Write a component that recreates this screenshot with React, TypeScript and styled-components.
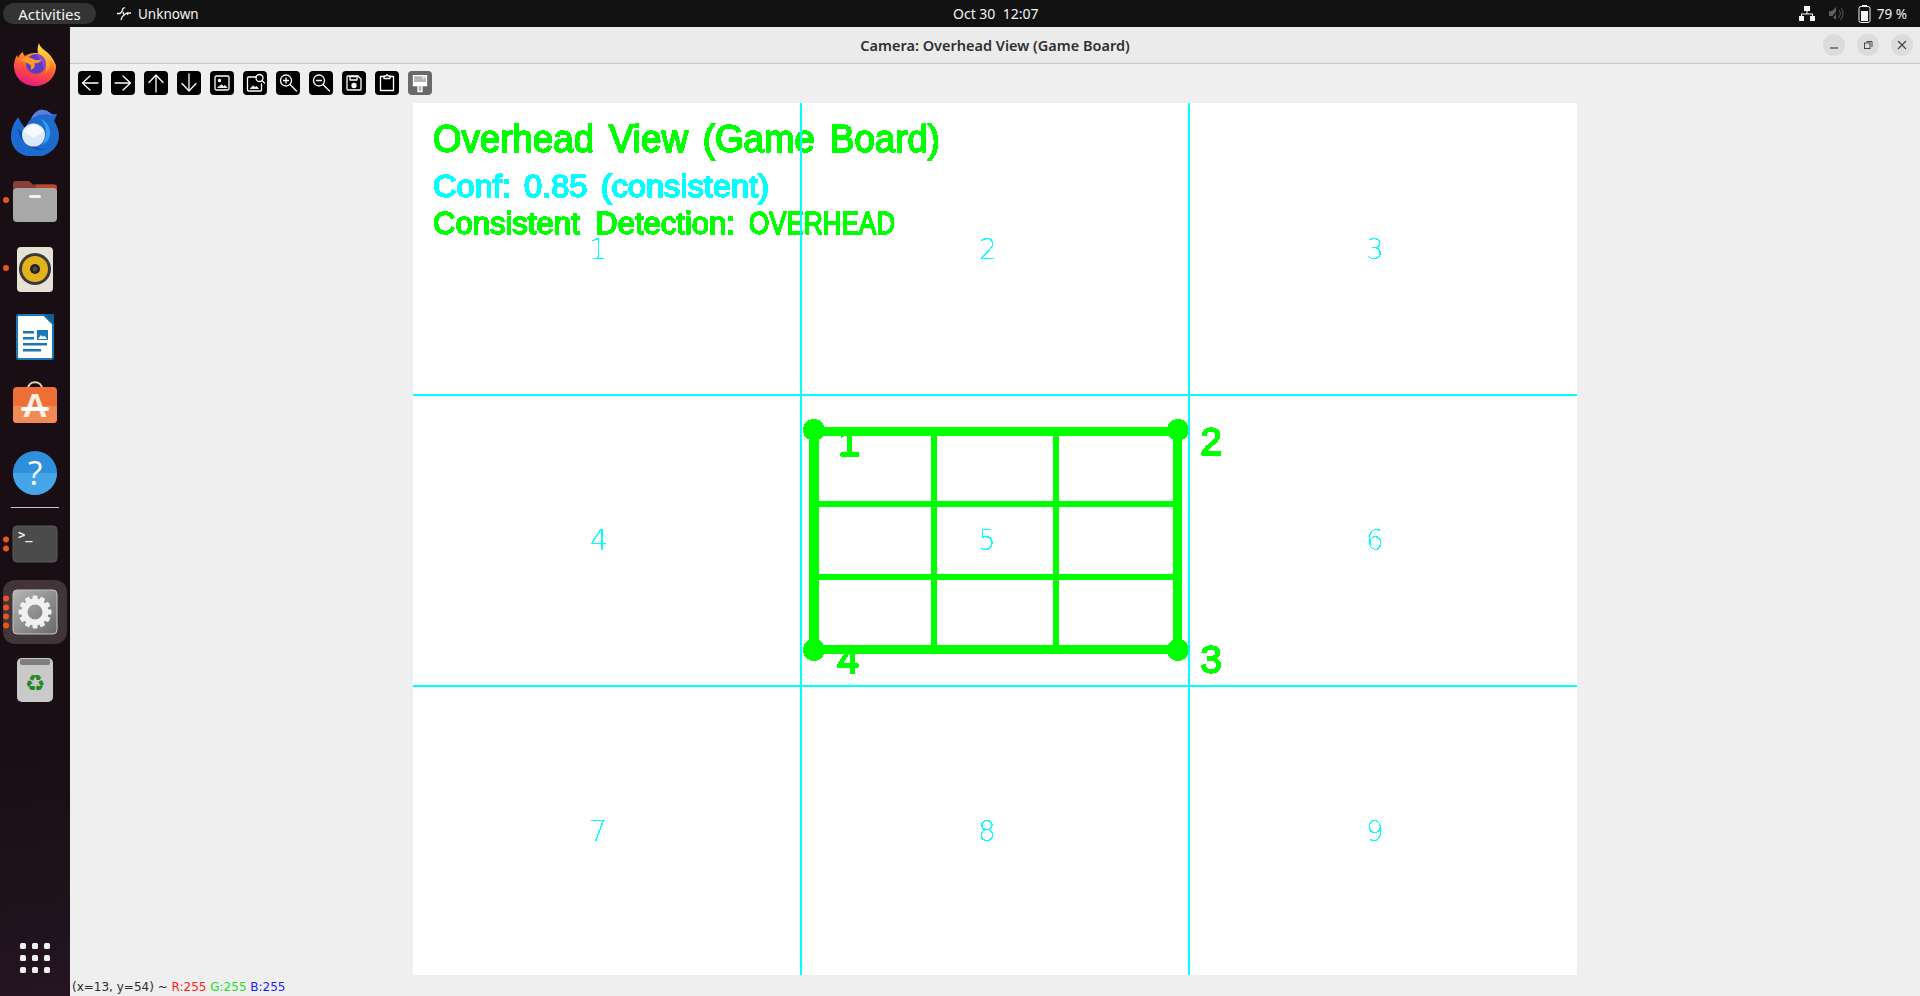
import React from 'react';
import styled, { createGlobalStyle } from 'styled-components';

const GlobalStyle = createGlobalStyle`
    html, body {
        margin: 0;
        padding: 0;
        height: 100%;
        overflow: hidden;
        background: #efefef;
    }
    #root {
        height: 100%;
    }
`;

const Page = styled.div`
    display: flex;
    flex-direction: column;
    width: 1920px;
    height: 996px;
    font-family: "Noto Sans", "Open Sans", sans-serif;
`;

const TopBar = styled.div`
    display: flex;
    align-items: center;
    height: 27px;
    flex: none;
    background: #121212;
    color: #f2f2f2;
    font-size: 13.500px;
`;

const TopLeft = styled.div`
    display: flex;
    align-items: center;
    width: 953px;
    padding-left: 3px;
    box-sizing: border-box;
`;

const Activities = styled.div`
    display: flex;
    align-items: center;
    justify-content: center;
    width: 93px;
    height: 21px;
    border-radius: 11px;
    background: #343434;
    font-size: 15px;
`;

const AppMenu = styled.div`
    display: flex;
    align-items: center;
    gap: 6px;
    margin-left: 20px;
`;

const Clock = styled.div`
    width: 85px;
    text-align: center;
    font-size: 14px;
    white-space: pre;
`;

const Tray = styled.div`
    display: flex;
    align-items: center;
    margin-left: auto;
    padding-right: 13px;
    gap: 14px;
`;

const Battery = styled.span`
    margin-left: -8px;
`;

const Body = styled.div`
    display: flex;
    flex: 1;
    min-height: 0;
`;

const Dock = styled.div`
    display: flex;
    flex-direction: column;
    align-items: center;
    width: 70px;
    flex: none;
    box-sizing: border-box;
    padding: 3px 0 23px;
    background: linear-gradient(170deg, #1a0e15 0%, #1a0e15 75%, #241520 100%);
`;

const DockItem = styled.div<{ $active?: boolean }>`
    position: relative;
    display: flex;
    align-items: center;
    justify-content: center;
    width: 64px;
    height: ${({ $active }) => ($active ? '64px' : '68px')};
    margin: ${({ $active }) => ($active ? '2px 0' : '0')};
    border-radius: 12px;
    background: ${({ $active }) => ($active ? '#413539' : 'transparent')};
`;

const RunDots = styled.div`
    position: absolute;
    left: 0;
    top: 50%;
    transform: translateY(-50%);
    display: flex;
    flex-direction: column;
    gap: 3px;
`;

const RunDot = styled.span`
    display: block;
    width: 6px;
    height: 6px;
    border-radius: 50%;
    background: #e95420;
`;

const DockRule = styled.div`
    width: 48px;
    height: 1px;
    margin: 1px 0 2px;
    background: #c9c5c8;
`;

const AppGrid = styled.div`
    display: grid;
    grid-template-columns: repeat(3, 6px);
    grid-auto-rows: 6px;
    gap: 6px;
    margin-top: auto;
`;

const AppDot = styled.span`
    border-radius: 1.5px;
    background: #f2f0f0;
`;

const Window = styled.div`
    display: flex;
    flex-direction: column;
    flex: 1;
    min-width: 0;
    background: #efefef;
`;

const TitleBar = styled.div`
    display: grid;
    grid-template-columns: 1fr auto 1fr;
    align-items: center;
    height: 36px;
    flex: none;
    background: #ebebeb;
    border-bottom: 1px solid #c6c6c6;
`;

const Title = styled.div`
    grid-column: 2;
    font-size: 14.500px;
    font-weight: 600;
    color: #303030;
`;

const WindowButtons = styled.div`
    display: flex;
    justify-content: flex-end;
    gap: 12px;
    padding-right: 7px;
`;

const WindowButton = styled.div`
    display: flex;
    align-items: center;
    justify-content: center;
    width: 22px;
    height: 22px;
    border-radius: 50%;
    background: #dcdcdc;
`;

const Toolbar = styled.div`
    display: flex;
    align-items: flex-start;
    gap: 9px;
    height: 39px;
    flex: none;
    box-sizing: border-box;
    padding: 7px 0 0 8px;
`;

const ToolButton = styled.div<{ $muted?: boolean }>`
    display: flex;
    width: 24px;
    height: 24px;
    border-radius: 4px;
    background: ${({ $muted }) => ($muted ? '#696969' : '#000')};
`;

const CanvasArea = styled.div`
    display: flex;
    justify-content: center;
    height: 872px;
    flex: none;
`;

const Canvas = styled.svg`
    display: block;
    width: 1164px;
    height: 872px;
    background: #fff;
`;

const StatusBar = styled.div`
    display: flex;
    align-items: center;
    flex: 1;
    padding: 2px 0 0 2px;
    font-family: "DejaVu Sans", sans-serif;
    font-size: 12px;
    color: #2c2c2c;
    white-space: pre;
`;

const Readout = styled.span<{ $color: string }>`
    color: ${({ $color }) => $color};
`;

const GREEN = '#00ff00';
const CYAN = '#00ffff';

const ToolIcon = ({ children }: { children: React.ReactNode }) => (
    <svg width="24" height="24" viewBox="0 0 24 24" fill="none" stroke="#fff" strokeWidth="1.300" strokeLinecap="round" strokeLinejoin="round">
        {children}
    </svg>
);

const tools: React.ReactNode[] = [
    <><path d="M20 12H5" /><path d="M12 5l-7.500 7 7.500 7" /></>,
    <><path d="M4 12h15" /><path d="M12 5l7.500 7-7.500 7" /></>,
    <><path d="M12 21V5" /><path d="M5 11.500L12 4l7 7.500" /></>,
    <><path d="M12 3v16" /><path d="M5 12.500l7 7.500 7-7.500" /></>,
    <><rect x="5" y="5" width="14" height="14" rx="1.500" /><circle cx="9.500" cy="9.500" r="1" fill="#fff" /><path d="M8 16.500h9l-2-2-1.500 1-1.500-1.500z" fill="#fff" strokeWidth="0.800" /></>,
    <><path d="M13 6H5.500a1 1 0 0 0-1 1v12a1 1 0 0 0 1 1h12a1 1 0 0 0 1-1v-6" /><circle cx="16.500" cy="7" r="3.500" /><path d="M19 9.500l2.500 2.500" /><path d="M7.500 17.500h8l-2-2-1.500 1-1.500-1.500z" fill="#fff" strokeWidth="0.800" /></>,
    <><circle cx="10" cy="9.500" r="5.500" /><path d="M14 13.500l6.500 6.500" /><path d="M7.500 9.500h5M10 7v5" /></>,
    <><circle cx="10" cy="9.500" r="5.500" /><path d="M14 13.500l6.500 6.500" /><path d="M7.500 9.500h5" /></>,
    <><path d="M5 6a1 1 0 0 1 1-1h10l3 3v10a1 1 0 0 1-1 1H6a1 1 0 0 1-1-1z" /><path d="M8 5.500h7v3.500H8z" /><circle cx="12" cy="14.500" r="2" fill="#fff" /></>,
    <><path d="M9 5.500H5.500v14h13v-14H15" /><path d="M9 7.500V5h2l1-1.500L13 5h2v2.500z" /></>,
    <><path d="M5.500 4.700h13v10h-4.500v5.800h-4v-5.800H5.500z" fill="#b5b5b5" strokeLinejoin="miter" /><path d="M5 11h14v4H5z" fill="#fff" stroke="none" /><path d="M15 5v3M17 5v2" stroke="#fff" strokeWidth="1" /></>,
];

const Firefox = () => (
    <svg width="48" height="48" viewBox="0 0 48 48">
        <defs>
            <linearGradient id="ffBase" x1="0.3" y1="1" x2="0.7" y2="0">
                <stop offset="0" stopColor="#e3158b" />
                <stop offset="0.45" stopColor="#ff4f3b" />
                <stop offset="1" stopColor="#ffb020" />
            </linearGradient>
            <linearGradient id="ffTop" x1="0.5" y1="0" x2="0.5" y2="1">
                <stop offset="0" stopColor="#ffe14a" />
                <stop offset="1" stopColor="#ff8a1f" />
            </linearGradient>
        </defs>
        <path d="M24 46C12 46 3 37 3 26c0-4 1-8 3-11l1 3c1-3 3-5 5-6 0 2 1 3 2 4 3-2 6-3 10-3 12 0 21 9 21 13 0 11-9 20-21 20z" fill="url(#ffBase)" />
        <path d="M28 3c1 5 6 7 10 11 5 5 7 11 7 15-1-4-3-7-6-9 1 5-1 11-5 14 3-6 1-14-5-18-3-3-3-8-1-13z" fill="url(#ffTop)" />
        <circle cx="25" cy="24" r="10" fill="#5c3ec6" />
        <path d="M25 14c6 0 10 5 10 10 0 2-1 5-2 6 0-6-4-11-8-16z" fill="#8a4bd0" />
        <path d="M9 20c4-4 10-3 13-1 4 2 7 1 9 0-1 3-5 5-8 4 2 3 0 6-4 7 2-2 1-5-1-6-3-2-6-2-9-4z" fill="#ff9a28" />
    </svg>
);

const Thunderbird = () => (
    <svg width="48" height="48" viewBox="0 3 48 48">
        <path d="M7.300 12.300C2 18 0 25 0 32c0 12 10 20 23 20 14 0 25-9 25-21 0-5-2-11-5-15l3-7h-6c-4-4-8-5-11-4-4 1-7 5-9 9-3 3-5 6-5.500 10C12 20 9 17 7.300 12.300z" fill="#1c6bcf" />
        <path d="M20 14c2-5 7-10 12-9 4 0 8 3 10 6-6-2-13-2-18 1z" fill="#5f7ddb" />
        <path d="M7 24c1 12 14 24 30 20-10 1-19-4-23-14z" fill="#0f4ea6" />
        <path d="M30 14c6 3 10 9 9 16-1 5-4 8-8 10 3-4 4-8 4-12 0-6-2-10-5-14z" fill="#3a9bf0" />
        <circle cx="22.500" cy="30" r="11.500" fill="#dbe8f7" />
        <path d="M12 26c3-2 7-6 10.500-7 3 0 8 4 11 7l-11 7z" fill="#f6f9fd" />
    </svg>
);

const Files = () => (
    <svg width="48" height="48" viewBox="0 0 48 48">
        <path d="M2 8a3 3 0 0 1 3-3h13l4 3.500h21a3 3 0 0 1 3 3V21H2z" fill="#8a3f3a" />
        <path d="M25 8.500h18a3 3 0 0 1 3 3V17H25z" fill="#b8492a" />
        <rect x="2" y="12" width="44" height="34" rx="4" fill="#a8a8a8" />
        <rect x="18" y="19" width="12" height="3" rx="1.500" fill="#f2f2f2" />
    </svg>
);

const Rhythmbox = () => (
    <svg width="48" height="48" viewBox="0 0 48 48">
        <rect x="6" y="3" width="36" height="45" rx="4" fill="#e6e2d6" />
        <circle cx="24" cy="25" r="16" fill="#3a3a3a" />
        <circle cx="24" cy="25" r="13" fill="#e3b21c" />
        <circle cx="24" cy="25" r="5" fill="#222" />
        <circle cx="24" cy="25" r="2.500" fill="#4a4a4a" />
    </svg>
);

const Writer = () => (
    <svg width="48" height="48" viewBox="0 -1 48 48">
        <path d="M6 4a2 2 0 0 1 2-2h25l9 9v33a2 2 0 0 1-2 2H8a2 2 0 0 1-2-2z" fill="#fff" stroke="#1a78b5" strokeWidth="2" />
        <path d="M33 1l10 10V1z" fill="#125f91" />
        <path d="M12 18h11v2.500H12zM12 24h11v2.500H12zM12 30h24v2.500H12zM12 36h18v2.500H12z" fill="#1a78b5" />
        <path d="M26 17h11v10H26z" fill="#1a78b5" />
        <path d="M27 26l3-4 2 2 1.500-1.500 2.500 3.500z" fill="#fff" />
    </svg>
);

const StoreLetter = styled.text`
    font-family: "Liberation Sans", sans-serif;
    font-size: 34px;
    font-weight: 700;
    fill: #fbeee4;
`;

const Store = () => (
    <svg width="48" height="48" viewBox="0 0 48 48">
        <path d="M17 9c0-9 14-9 14 0" fill="none" stroke="#eed7b8" strokeWidth="2" />
        <rect x="2" y="7" width="44" height="36" rx="4" fill="#ee6f36" />
        <path d="M2 26h44v13a4 4 0 0 1-4 4H6a4 4 0 0 1-4-4z" fill="#f28a55" />
        <StoreLetter x="24" y="37" textAnchor="middle">A</StoreLetter>
        <rect x="10" y="27" width="28" height="4" rx="2" fill="#fff" />
    </svg>
);

const HelpMark = styled.text`
    font-family: "Open Sans", sans-serif;
    font-size: 33px;
    fill: #fff;
`;

const Help = () => (
    <svg width="48" height="48" viewBox="0 -1 48 48">
        <circle cx="24" cy="24" r="22" fill="#2f8fdd" />
        <path d="M2 24a22 22 0 0 0 44 0z" fill="#46a5e6" />
        <HelpMark x="24" y="36" textAnchor="middle">?</HelpMark>
    </svg>
);

const Prompt = styled.text`
    font-family: "DejaVu Sans Mono", monospace;
    font-size: 12px;
    font-weight: 700;
    fill: #f2f2f2;
`;

const Terminal = () => (
    <svg width="48" height="48" viewBox="0 0 48 48">
        <rect x="2" y="6" width="44" height="36" rx="4" fill="#4b4b4b" stroke="#5b5b5b" />
        <Prompt x="7" y="19">&gt;_</Prompt>
    </svg>
);

const gearTeeth = Array.from({ length: 12 }, (_, i) => i * 30);

const Settings = () => (
    <svg width="48" height="48" viewBox="0 0 48 48">
        <defs>
            <linearGradient id="setBg" x1="0" y1="0" x2="1" y2="1">
                <stop offset="0" stopColor="#b5b5b5" />
                <stop offset="1" stopColor="#6a6a6a" />
            </linearGradient>
        </defs>
        <rect x="2" y="2" width="44" height="44" rx="4" fill="url(#setBg)" stroke="#c4c4c4" />
        <circle cx="24" cy="24" r="10.500" fill="none" stroke="#f0f0f0" strokeWidth="6" />
        {gearTeeth.map((deg) => (
            <rect key={deg} x="21.500" y="7.500" width="5" height="5" rx="1" fill="#f0f0f0" transform={`rotate(${deg} 24 24)`} />
        ))}
    </svg>
);

const RecycleMark = styled.text`
    font-family: "DejaVu Sans", sans-serif;
    font-size: 23px;
    fill: #23881f;
`;

const Trash = () => (
    <svg width="48" height="48" viewBox="0 0 48 48">
        <path d="M6 7a5 5 0 0 1 5-5h26a5 5 0 0 1 5 5v34a5 5 0 0 1-5 5H11a5 5 0 0 1-5-5z" fill="#c9c9c9" />
        <rect x="9" y="3" width="30" height="6" rx="2" fill="#7d7d7d" />
        <RecycleMark x="24" y="35" textAnchor="middle">♻</RecycleMark>
    </svg>
);

const dockTop = [
    { Icon: Firefox, dots: 0 },
    { Icon: Thunderbird, dots: 0 },
    { Icon: Files, dots: 1 },
    { Icon: Rhythmbox, dots: 1 },
    { Icon: Writer, dots: 0 },
    { Icon: Store, dots: 0 },
    { Icon: Help, dots: 0 },
];

const cellNumbers = [
    { n: '1', x: 598, y: 259 },
    { n: '2', x: 988, y: 259 },
    { n: '3', x: 1375, y: 259 },
    { n: '4', x: 599, y: 550 },
    { n: '5', x: 987, y: 550 },
    { n: '6', x: 1375, y: 550 },
    { n: '7', x: 598, y: 841 },
    { n: '8', x: 987, y: 841 },
    { n: '9', x: 1375, y: 841 },
];

const CanvasText = styled.text<{ $color: string; $wordGap?: number }>`
    font-family: "Liberation Sans", sans-serif;
    fill: ${({ $color }) => $color};
    stroke: ${({ $color }) => $color};
    stroke-width: 1.600px;
    word-spacing: ${({ $wordGap }) => $wordGap ?? 0}px;
`;

const CellNumber = styled.text`
    font-family: "DejaVu Sans", sans-serif;
    font-size: 28px;
    font-weight: 200;
    fill: ${CYAN};
`;

const GameCanvas = () => (
    <Canvas viewBox="413 103 1164 872">
        <defs>
            <filter id="hard" colorInterpolationFilters="sRGB">
                <feComponentTransfer>
                    <feFuncA type="discrete" tableValues="0 1" />
                </feComponentTransfer>
            </filter>
        </defs>
        <g filter="url(#hard)">
            {cellNumbers.map((c) => (
                <CellNumber key={c.n} x={c.x} y={c.y} textAnchor="middle">{c.n}</CellNumber>
            ))}
            <CanvasText $color={GREEN} $wordGap={5} x="433" y="152" fontSize="38" textLength="507" lengthAdjust="spacingAndGlyphs">Overhead View (Game Board)</CanvasText>
            <CanvasText $color={CYAN} $wordGap={4} x="433" y="197" fontSize="31" textLength="336" lengthAdjust="spacingAndGlyphs">Conf: 0.85 (consistent)</CanvasText>
            <CanvasText $color={GREEN} $wordGap={7} x="433" y="234" fontSize="31" textLength="302" lengthAdjust="spacingAndGlyphs">Consistent Detection:</CanvasText>
            <CanvasText $color={GREEN} x="749" y="234" fontSize="31" textLength="146" lengthAdjust="spacingAndGlyphs">OVERHEAD</CanvasText>
        </g>
        <g shapeRendering="crispEdges" fill={GREEN}>
            <rect x="809" y="427" width="10" height="227" />
            <rect x="1173" y="427" width="9" height="227" />
            <rect x="809" y="427" width="373" height="9" />
            <rect x="809" y="645" width="373" height="9" />
            <rect x="931" y="427" width="6" height="227" />
            <rect x="1053" y="427" width="6" height="227" />
            <rect x="809" y="501" width="373" height="6" />
            <rect x="809" y="574" width="373" height="6" />
            <circle cx="814" cy="430" r="11" />
            <circle cx="1178" cy="430" r="11" />
            <circle cx="814" cy="650" r="11" />
            <circle cx="1178" cy="650" r="11" />
        </g>
        <g filter="url(#hard)">
            <CanvasText $color={GREEN} x="849" y="456" fontSize="39" textAnchor="middle">1</CanvasText>
            <CanvasText $color={GREEN} x="1211" y="455" fontSize="39" textAnchor="middle">2</CanvasText>
            <CanvasText $color={GREEN} x="1211" y="673" fontSize="39" textAnchor="middle">3</CanvasText>
            <CanvasText $color={GREEN} x="848" y="673" fontSize="39" textAnchor="middle">4</CanvasText>
        </g>
        <g shapeRendering="crispEdges" fill={CYAN}>
            <rect x="800" y="103" width="2" height="872" />
            <rect x="1188" y="103" width="2" height="872" />
            <rect x="413" y="394" width="1164" height="2" />
            <rect x="413" y="685" width="1164" height="2" />
        </g>
    </Canvas>
);

const App = () => {
    return (
        <Page>
            <GlobalStyle />
            <TopBar>
                <TopLeft>
                    <Activities>Activities</Activities>
                    <AppMenu>
                        <svg width="16" height="16" viewBox="0 0 16 16" fill="none" stroke="#f2f2f2" strokeWidth="1.300">
                            <path d="M1 7.500h3l2-2 1-3 2-1M7 6l1 3-2 2-1 3M8 9l3-2h4M11 7l1 2" />
                        </svg>
                        <span>Unknown</span>
                    </AppMenu>
                </TopLeft>
                <Clock>{'Oct 30  12:07'}</Clock>
                <Tray>
                    <svg width="16" height="15" viewBox="0 0 16 15" fill="#f5f5f5">
                        <rect x="5" y="0" width="6" height="5" />
                        <rect x="0" y="10" width="5" height="5" />
                        <rect x="11" y="10" width="5" height="5" />
                        <path d="M7.500 5h1v2.500h5.500V10h-1V8.500H3V10H2V7.500h5.500z" />
                    </svg>
                    <svg width="15" height="15" viewBox="0 0 15 15" fill="#5e5e5e">
                        <path d="M0 5h3l4-4v13l-4-4H0z" />
                        <path d="M9 3c3 2 3 7 0 9M11 1c4 3 4 10 0 13" fill="none" stroke="#5e5e5e" />
                        <path d="M1 14L12 1" stroke="#121212" strokeWidth="1.500" />
                    </svg>
                    <svg width="13" height="18" viewBox="0 0 13 18">
                        <rect x="4" y="0" width="5" height="2" fill="#f5f5f5" />
                        <rect x="1" y="1.500" width="11" height="16" rx="2" fill="none" stroke="#f5f5f5" />
                        <rect x="3" y="6" width="7" height="10" fill="#f5f5f5" />
                    </svg>
                    <Battery>79 %</Battery>
                </Tray>
            </TopBar>
            <Body>
                <Dock>
                    {dockTop.map(({ Icon, dots }, i) => (
                        <DockItem key={i}>
                            {dots > 0 && (
                                <RunDots>
                                    {Array.from({ length: dots }, (_, d) => <RunDot key={d} />)}
                                </RunDots>
                            )}
                            <Icon />
                        </DockItem>
                    ))}
                    <DockRule />
                    <DockItem>
                        <RunDots>
                            <RunDot />
                            <RunDot />
                        </RunDots>
                        <Terminal />
                    </DockItem>
                    <DockItem $active>
                        <RunDots>
                            <RunDot />
                            <RunDot />
                            <RunDot />
                            <RunDot />
                        </RunDots>
                        <Settings />
                    </DockItem>
                    <DockItem>
                        <Trash />
                    </DockItem>
                    <AppGrid>
                        {Array.from({ length: 9 }, (_, i) => <AppDot key={i} />)}
                    </AppGrid>
                </Dock>
                <Window>
                    <TitleBar>
                        <Title>Camera: Overhead View (Game Board)</Title>
                        <WindowButtons>
                            <WindowButton>
                                <svg width="10" height="10" viewBox="0 0 10 10"><path d="M1 8h8" stroke="#444" strokeWidth="1.200" /></svg>
                            </WindowButton>
                            <WindowButton>
                                <svg width="10" height="10" viewBox="0 0 10 10" fill="none" stroke="#444"><rect x="1.500" y="3" width="5.500" height="5.500" /><path d="M3.500 1.500H9V7" /></svg>
                            </WindowButton>
                            <WindowButton>
                                <svg width="10" height="10" viewBox="0 0 10 10"><path d="M1 1l8 8M9 1l-8 8" stroke="#444" strokeWidth="1.200" /></svg>
                            </WindowButton>
                        </WindowButtons>
                    </TitleBar>
                    <Toolbar>
                        {tools.map((icon, i) => (
                            <ToolButton key={i} $muted={i === tools.length - 1}>
                                <ToolIcon>{icon}</ToolIcon>
                            </ToolButton>
                        ))}
                    </Toolbar>
                    <CanvasArea>
                        <GameCanvas />
                    </CanvasArea>
                    <StatusBar>
                        {'(x=13, y=54) ~ '}
                        <Readout $color="#ff2020">R:255 </Readout>
                        <Readout $color="#20e020">G:255 </Readout>
                        <Readout $color="#2020ff">B:255</Readout>
                    </StatusBar>
                </Window>
            </Body>
        </Page>
    );
};

export default App;
